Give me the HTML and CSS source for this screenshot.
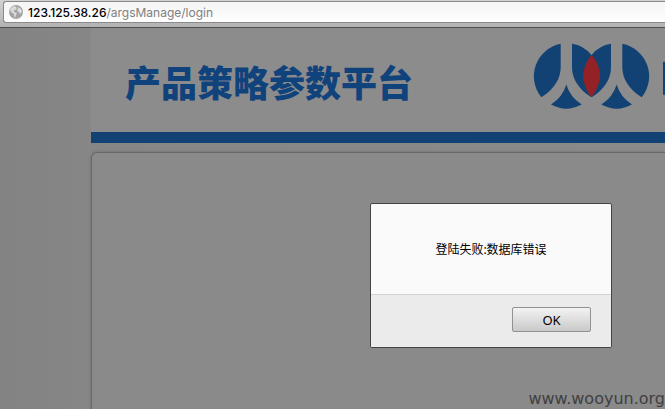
FILE: index.html
```
<!DOCTYPE html>
<html lang="zh-CN">
<head>
<meta charset="utf-8">
<title>产品策略参数平台</title>
<link rel="stylesheet" href="styles.css">
</head>
<body>
<div class="toolbar">
  <div class="address">
    <svg class="globe" viewBox="0 0 14 14" aria-hidden="true">
      <circle cx="7" cy="7" r="7" fill="#a3a3a3"/>
      <path d="M1 4Q3 1 6 1L8 3L7 5L5 5L5 7L8 8L7 10L6 13L5 11L5 9L2 7Z" fill="#d9d9d9"/>
      <path d="M9 2L12 4L13 7L11 9L10 7L8 6L9 4Z" fill="#dedede"/>
    </svg>
    <label class="host" for="path">123.125.38.26</label>
    <input class="path" id="path" type="text" value="/argsManage/login">
  </div>
</div>
<main class="page">
  <div class="content">
    <header class="banner">
      <h1 class="title">产品策略参数平台</h1>
      <svg class="logo" viewBox="40 46 396 197" role="img" aria-label="logo">
        <g fill="#124273">
          <path d="M123 48A99 99 0 0 0 65 208C106 182 123 150 123 118Z"/>
          <path d="M157 48Q192 53 216 82L215 208C174 182 157 150 157 118Z"/>
          <path d="M94 230Q129 208 140 170Q151 208 186 230Q140 255 94 230Z"/>
          <path d="M308 48A99 99 0 0 1 366 208C325 182 308 150 308 118Z"/>
          <path d="M274 48Q239 53 215 82L216 208C257 182 274 150 274 118Z"/>
          <path d="M245 230Q280 208 291 170Q302 208 337 230Q291 255 245 230Z"/>
          <path d="M430 102H436V201H430Z"/>
        </g>
        <path d="M216 81Q267 144 215 208Q165 144 216 81Z" fill="#932126"/>
      </svg>
    </header>
    <section class="panel"></section>
  </div>
  <div class="dialog" role="alertdialog" aria-labelledby="message">
    <p class="message" id="message">登陆失败:数据库错误</p>
    <div class="actions"><button class="ok" type="button">OK</button></div>
  </div>
  <span class="watermark">www.wooyun.org</span>
</main>
</body>
</html>
```
FILE: styles.css
```
* { box-sizing: border-box; }

body {
  margin: 0;
  min-height: 100vh;
  display: flex;
  flex-direction: column;
  overflow: hidden;
  font-family: "Noto Sans", "Noto Sans CJK SC", sans-serif;
}

.toolbar {
  height: 28px;
  padding: 1px 0 4px 3px;
  background: linear-gradient(#d2d2d2, #b2b2b2);
  border-bottom: 1px solid #505050;
}

.address {
  height: 22px;
  display: flex;
  align-items: center;
  padding-left: 5px;
  background: linear-gradient(#f4f4f4, #fff);
  border: 1px solid #8a8a8a;
  border-right: 0;
  border-radius: 3px 0 0 3px;
  font: 12px "Inter", sans-serif;
}

.globe { width: 14px; height: 14px; margin-right: 5px; }

.host { color: #000; font-weight: 500; }

.path {
  flex: 1;
  min-width: 0;
  padding: 0;
  border: 0;
  outline: 0;
  background: none;
  color: #808080;
  font: inherit;
}

.page {
  flex: 1;
  display: flex;
  position: relative;
  padding-left: 91px;
  background: linear-gradient(90deg, #838383, #868686 90px, #8a8a8a);
}

.content {
  flex: 1;
  min-width: 0;
  display: flex;
  flex-direction: column;
  gap: 9px;
}

.banner {
  height: 115px;
  display: flex;
  justify-content: space-between;
  align-items: flex-start;
  padding: 15px 0 0 34px;
  background: #8c8c8c;
  border-bottom: 11px solid #124273;
}

.title {
  margin: 12px 0 0;
  color: #10427c;
  font: 900 36px/52px "Noto Sans CJK SC", sans-serif;
  white-space: nowrap;
}

.logo { width: 132px; height: 66px; flex: none; }

.panel {
  flex: 1;
  background: #8a8a8a;
  border: 1px solid #686868;
  border-width: 1px 0 0 1px;
  border-radius: 6px 0 0 0;
  box-shadow: 0 0 3px rgba(0, 0, 0, .2);
}

.dialog {
  position: absolute;
  left: 370px;
  top: 175px;
  width: 242px;
  overflow: hidden;
  background: #fafafa;
  border: 1px solid #444;
  border-radius: 2px;
}

.message {
  margin: 0;
  padding: 36px 20px 34px;
  color: #000;
  font-size: 12px;
  line-height: 20px;
  text-align: center;
}

.actions {
  display: flex;
  justify-content: flex-end;
  padding: 12px 20px 15px;
  background: #ebebeb;
  border-top: 1px solid #d4d4d4;
}

.ok {
  width: 79px;
  height: 25px;
  padding: 0;
  color: #000;
  background: linear-gradient(#f3f3f3, #c9c9c9);
  border: 1px solid #929292;
  border-radius: 2px;
  font: 13px "Noto Sans", sans-serif;
}

.watermark {
  position: absolute;
  right: 0;
  bottom: 0;
  color: #404040;
  font: 16px/20px "DejaVu Sans", sans-serif;
}
```
